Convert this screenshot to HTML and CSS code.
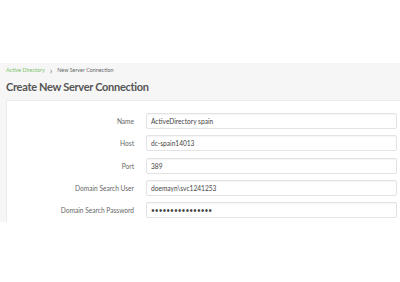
FILE: index.html
```html
<!DOCTYPE html>
<html lang="en">
<head>
    <meta charset="UTF-8">
    <title>Create New Server Connection</title>
    <link rel="stylesheet" href="styles.css">
</head>
<body>
    <div class="page">
        <div class="breadcrumb">
            <a href="#">Active Directory</a>
            <span class="sep">&#x203A;</span>
            <span>New Server Connection</span>
        </div>
        <h1>Create New Server Connection</h1>

        <div class="panel">
            <form class="form">
                <label>Name</label>
                <input type="text" value="ActiveDirectory spain">

                <label>Host</label>
                <input type="text" value="dc-spain14013">

                <label>Port</label>
                <input type="text" value="389">

                <label>Domain Search User</label>
                <input type="text" value="doemayn\svc1241253">

                <label>Domain Search Password</label>
                <input type="password" value="passwordpassword">
            </form>
        </div>
    </div>
</body>
</html>
```

FILE: styles.css
```css
* {
    margin: 0;
    padding: 0;
    box-sizing: border-box;
}

body {
    font-family: Lato, 'Open Sans', sans-serif;
    background: #fff;
    color: #555;
}

.page {
    margin-top: 63px;
    height: 159px;
    background: #f6f6f6;
    padding-left: 6px;
    overflow: hidden;
}

.breadcrumb {
    display: flex;
    align-items: center;
    gap: 5px;
    height: 14px;
    font-size: 5.4px;
    color: #666;
}

.breadcrumb a {
    color: #7cc36b;
    text-decoration: none;
}

.breadcrumb .sep {
    font-size: 9px;
    color: #777;
}

h1 {
    font-size: 11px;
    font-weight: 700;
    letter-spacing: -0.3px;
    color: #555;
    height: 23px;
    line-height: 20px;
}

.panel {
    background: #fff;
    border: 1px solid #ececec;
    border-right: none;
    height: 130px;
    padding: 12px 3px 0 0;
}

.form {
    display: grid;
    grid-template-columns: 127px 1fr;
    column-gap: 12px;
    row-gap: 6.3px;
    align-items: center;
}

.form label {
    text-align: right;
    font-size: 6.6px;
    color: #666;
}

.form input {
    height: 16px;
    border: 1px solid #e3e3e3;
    border-radius: 2px;
    padding: 0 4px;
    font-family: Lato, sans-serif;
    font-size: 6.6px;
    color: #444;
    background: #fff;
    box-shadow: inset 0 1px 1px rgba(0, 0, 0, 0.04);
}
```
